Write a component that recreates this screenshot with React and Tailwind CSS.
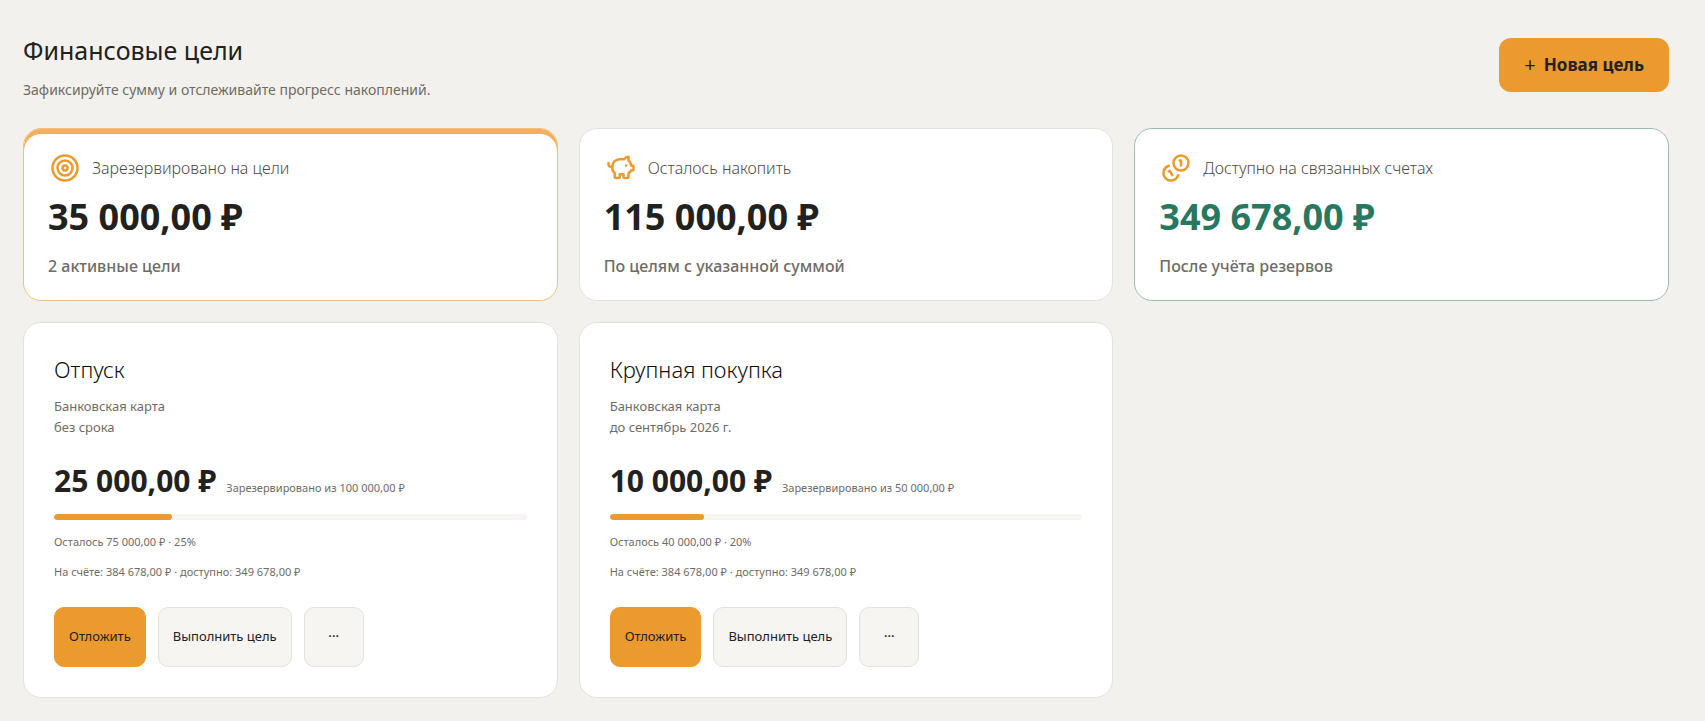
import { PiggyBank, Target } from "lucide-react";
import clsx from "clsx";

const Coins = ({ size }) => (
  <svg
    width={size}
    height={size}
    viewBox="0 0 24 24"
    fill="none"
    stroke="currentColor"
    strokeWidth="2"
    strokeLinecap="round"
    strokeLinejoin="round"
    aria-hidden="true"
  >
    <path d="M13.744 17.736a6 6 0 1 1-7.48-7.48" />
    <path d="M15 6h1v4" />
    <path d="m6.134 14.768.866-.5 2 3.464" />
    <circle cx="16" cy="8" r="6" />
  </svg>
);

const stats = [
  {
    icon: Target,
    label: "Зарезервировано на цели",
    value: "35 000,00 ₽",
    note: "2 активные цели",
    card: "border-[#f0c080] shadow-[inset_0_5px_0_#f0b05d]",
    valueColor: "text-[#23211e]",
  },
  {
    icon: PiggyBank,
    label: "Осталось накопить",
    value: "115 000,00 ₽",
    note: "По целям с указанной суммой",
    card: "border-[#e4e2dc]",
    valueColor: "text-[#23211e]",
  },
  {
    icon: Coins,
    label: "Доступно на связанных счетах",
    value: "349 678,00 ₽",
    note: "После учёта резервов",
    card: "border-[#9dbcb0]",
    valueColor: "text-[#28775f]",
  },
];

const goals = [
  {
    id: 1,
    name: "Отпуск",
    account: "Банковская карта",
    due: "без срока",
    saved: "25 000,00 ₽",
    total: "100 000,00 ₽",
    left: "75 000,00 ₽",
    percent: 25,
    balance: "384 678,00 ₽",
    available: "349 678,00 ₽",
  },
  {
    id: 2,
    name: "Крупная покупка",
    account: "Банковская карта",
    due: "до сентябрь 2026 г.",
    saved: "10 000,00 ₽",
    total: "50 000,00 ₽",
    left: "40 000,00 ₽",
    percent: 20,
    balance: "384 678,00 ₽",
    available: "349 678,00 ₽",
  },
];

const StatCard = ({ icon: Icon, label, value, note, card, valueColor }) => (
  <article className={clsx("rounded-[18px] border bg-white px-6 py-[22px]", card)}>
    <div className="flex items-center gap-2.5">
      <span className="flex size-[34px] shrink-0 items-center justify-center text-[#eb9a2d]">
        <Icon size={30} />
      </span>
      <h2 className="text-base leading-6 font-light text-[#4f4c47]">{label}</h2>
    </div>
    <p className={clsx("mt-2 text-[36px] leading-[48px] font-bold", valueColor)}>{value}</p>
    <p className="mt-[13px] text-base leading-6 font-medium text-[#6f6c66]">{note}</p>
  </article>
);

const GoalCard = ({ goal }) => (
  <article className="rounded-[18px] border border-[#e4e2dc] bg-white p-[30px] text-[#6f6c66]">
    <h2 className="text-[22px] leading-8 font-light text-[#0f0e0c]">{goal.name}</h2>
    <p className="mt-[11px] text-[13px] leading-[21px]">
      {goal.account}
      <br />
      {goal.due}
    </p>

    <div className="mt-[23px] flex items-baseline gap-2.5">
      <strong className="text-[30px] leading-10 font-bold text-[#23211e]">{goal.saved}</strong>
      <span className="text-[11px]">Зарезервировано из {goal.total}</span>
    </div>

    <div
      role="progressbar"
      aria-valuenow={goal.percent}
      aria-valuemin={0}
      aria-valuemax={100}
      aria-label={goal.name}
      className="mt-[13px] h-1.5 overflow-hidden rounded-full bg-[#f7f5f1]"
    >
      <div className="h-full rounded-full bg-[#eb9a2d]" style={{ width: `${goal.percent}%` }} />
    </div>

    <p className="mt-3 text-[11px] leading-5">
      Осталось {goal.left} · {goal.percent}%
    </p>
    <p className="mt-2.5 text-[11px] leading-5">
      На счёте: {goal.balance} · доступно: {goal.available}
    </p>

    <div className="mt-[25px] flex gap-3 text-[13px] text-[#23211e]">
      <button type="button" className="h-15 rounded-[10px] border border-[#eb9a2d] bg-[#eb9a2d] px-3.5">
        Отложить
      </button>
      <button type="button" className="h-15 rounded-[10px] border border-[#e4e2dc] bg-[#f7f5f1] px-3.5">
        Выполнить цель
      </button>
      <button
        type="button"
        aria-label="Ещё"
        className="size-15 rounded-[10px] border border-[#e4e2dc] bg-[#f7f5f1] font-medium"
      >
        ···
      </button>
    </div>
  </article>
);

const App = () => {
  return (
    <main className="min-h-screen bg-[#f3f1ed] pt-[30px] pr-9 pb-[22px] pl-[23px] font-['Noto_Sans','Open_Sans',sans-serif] text-[#23211e]">
      <header className="mb-7 flex items-center justify-between">
        <div>
          <h1 className="text-[25px] leading-10">Финансовые цели</h1>
          <p className="mt-2.5 text-sm leading-5 text-[#6f6c66]">
            Зафиксируйте сумму и отслеживайте прогресс накоплений.
          </p>
        </div>
        <button
          type="button"
          className="flex h-[54px] items-center gap-2 rounded-xl bg-[#eb9a2d] px-[25px] text-[17px] font-bold"
        >
          <span className="text-xl font-normal">+</span>
          Новая цель
        </button>
      </header>

      <section className="grid grid-cols-3 gap-[21px]">
        {stats.map((stat) => (
          <StatCard key={stat.label} {...stat} />
        ))}
      </section>

      <section className="mt-[21px] grid grid-cols-3 gap-[21px]">
        {goals.map((goal) => (
          <GoalCard key={goal.id} goal={goal} />
        ))}
      </section>
    </main>
  );
};

export default App;
